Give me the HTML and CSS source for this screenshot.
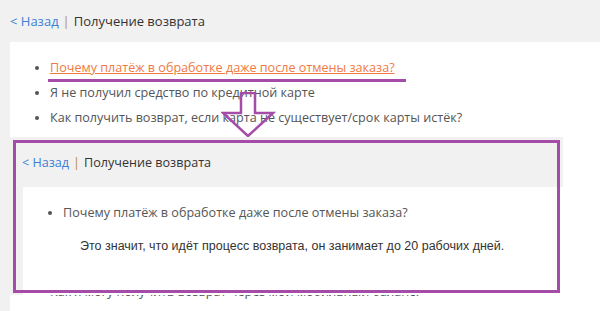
FILE: index.html
```html
<!DOCTYPE html>
<html lang="ru">
<head>
<meta charset="UTF-8">
<meta name="viewport" content="width=device-width, initial-scale=1.0">
<title>Получение возврата</title>
<link rel="stylesheet" href="styles.css">
</head>
<body>

<div class="crumbs">
    <a class="back" href="#">&lt; Назад</a>
    <span class="sep">|</span>
    <span class="title">Получение возврата</span>
</div>

<div class="card">
    <ul class="faq">
        <li><a class="active" href="#">Почему платёж в обработке даже после отмены заказа?</a></li>
        <li>Я не получил средство по кредитной карте</li>
        <li>Как получить возврат, если карта не существует/срок карты истёк?</li>
        <li class="gap">Как я могу получить возврат через мой мобильный баланс?</li>
    </ul>
</div>

<!-- annotation: underline + arrow -->
<div class="mark"></div>
<svg class="arrow" width="56" height="46" viewBox="0 0 56 46">
    <path d="M20 1 H34 V21 H52 L27 44 L2 21 H20 Z" fill="none" stroke="#a54ca9" stroke-width="2.5" stroke-linejoin="miter"/>
</svg>

<!-- second screenshot, framed -->
<div class="shot">
    <div class="crumbs small">
        <a class="back" href="#">&lt; Назад</a>
        <span class="sep">|</span>
        <span class="title">Получение возврата</span>
    </div>
    <div class="card inner">
        <ul class="faq">
            <li>Почему платёж в обработке даже после отмены заказа?</li>
        </ul>
        <p class="answer">Это значит, что идёт процесс возврата, он занимает до 20 рабочих дней.</p>
    </div>
    <div class="frame"></div>
</div>

</body>
</html>
```

FILE: styles.css
```css
body {
    font-family: "Open Sans", Arial, sans-serif;
    background-color: #f1f1f1;
    margin: 0;
    padding: 0;
    width: 600px;
    height: 311px;
    overflow: hidden;
    position: relative;
}

.crumbs {
    height: 42px;
    padding-left: 10px;
    display: flex;
    align-items: center;
    gap: 4px;
    font-size: 13px;
    color: #333;
    box-sizing: border-box;
}

.back {
    color: #3d7fd4;
    text-decoration: none;
}

.sep {
    color: #b5893c;
}

.card {
    background-color: #fff;
    margin-left: 10px;
    padding: 13px 0 0 0;
    height: 256px;
}

.faq {
    margin: 0;
    padding-left: 40px;
    font-size: 12.6px;
    color: #555;
}

.faq li {
    line-height: 25px;
}

.faq li.gap {
    margin-top: 149px;
}

.active {
    color: #f07a42;
    text-decoration: underline;
}

.mark {
    position: absolute;
    left: 48px;
    top: 79px;
    width: 358px;
    height: 3px;
    background-color: #a54ca9;
}

.arrow {
    position: absolute;
    left: 221px;
    top: 92px;
}

.shot {
    position: absolute;
    left: 10px;
    top: 137px;
    width: 553px;
    height: 158px;
    background-color: #f1f1f1;
}

.crumbs.small {
    height: 50px;
    padding-left: 12px;
    font-size: 12.6px;
}

.card.inner {
    margin-left: 13px;
    height: 108px;
    padding-top: 13px;
    box-sizing: border-box;
}

.card.inner .faq li {
    line-height: 26px;
}

.answer {
    margin: 13px 0 0 57px;
    font-family: "Liberation Sans", Arial, sans-serif;
    font-size: 12.5px;
    color: #333;
}

.frame {
    position: absolute;
    left: 3px;
    top: 3px;
    width: 547px;
    height: 153px;
    border: 3px solid #a54ca9;
    box-sizing: border-box;
}
```
